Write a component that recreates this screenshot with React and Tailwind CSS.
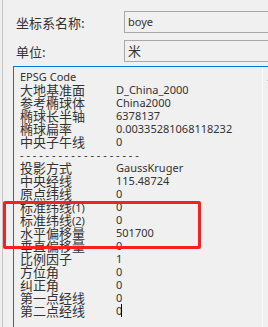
import React from "react";

const cjk = "font-['Noto_Sans_CJK_SC',sans-serif]";
const latin = "font-['Noto_Sans','Noto_Sans_CJK_SC',sans-serif]";

const params = [
  ["大地基准面", "", "D_China_2000"],
  ["参考椭球体", "", "China2000"],
  ["椭球长半轴", "", "6378137"],
  ["椭球扁率", "", "0.00335281068118232"],
  ["中央子午线", "", "0"],
  null,
  ["投影方式", "", "GaussKruger"],
  ["中央经线", "", "115.48724"],
  ["原点纬线", "", "0"],
  ["标准纬线", "(1)", "0"],
  ["标准纬线", "(2)", "0"],
  ["水平偏移量", "", "501700"],
  ["垂直偏移量", "", "0"],
  ["比例因子", "", "1"],
  ["方位角", "", "0"],
  ["纠正角", "", "0"],
  ["第一点经线", "", "0"],
  ["第二点经线", "", "0"],
];

function Field({ label, value, valueCjk }) {
  return (
    <div className="flex items-center h-[22px]">
      <div className={`w-[108px] text-[13px] leading-[13px] text-[#333] ${cjk}`}>{label}</div>
      <div className="flex-1 h-[22px] border border-[#a8a8a8] bg-[#f0f0f0] flex items-center pl-[3px] -mr-[20px]">
        <span className={`text-[#333] ${valueCjk ? `text-[13px] ${cjk}` : `text-[11px] ${latin}`}`}>{value}</span>
      </div>
    </div>
  );
}

export default function App() {
  return (
    <div className="relative w-[268px] h-[327px] overflow-hidden bg-[#f0f0f0] pl-[2px]">
      <div className="h-full border-l border-[#c4c4c4] pl-[10px] pt-[11px]">
        <div className="pl-[3px] flex flex-col gap-[7px]">
          <Field label="坐标系名称:" value="boye" />
          <Field label="单位:" value="米" valueCjk />
        </div>

        {/* parameter text box */}
        <div className="mt-[4px] w-[266px] h-[280px] border-l border-t border-[#0078d7] flex">
          <div className="flex-1 pl-[6px] pt-[3px] text-[#333]">
            <div className={`h-[13px] leading-[13px] text-[11px] ${latin}`}>EPSG Code</div>
            {params.map((p, i) =>
              p === null ? (
                <div key={i} className={`h-[13px] leading-[13px] text-[11px] whitespace-nowrap ${latin}`}>
                  - - - - - - - - - - - - - - - - - - -
                </div>
              ) : (
                <div key={i} className="flex h-[13px] leading-[13px] whitespace-nowrap">
                  <div className={`w-[96px] text-[13px] ${cjk}`}>
                    {p[0]}
                    {p[1] && <span className={`text-[11px] ${latin}`}>{p[1]}</span>}
                  </div>
                  <div className={`text-[11px] ${latin} flex items-center`}>
                    {p[2]}
                    {i === params.length - 1 && <span className="inline-block w-px h-[13px] bg-black ml-[-1px]" />}
                  </div>
                </div>
              )
            )}
          </div>
          <div className="w-[17px] border-l border-[#fafafa] bg-[#f0f0f0] flex justify-center pt-[9px]">
            <svg width="9" height="5" viewBox="0 0 9 5">
              <polygon points="0,5 4.5,0 9,5 7,5 4.5,2.2 2,5" fill="#a3a3a3" />
            </svg>
          </div>
        </div>
      </div>

      {/* red annotation */}
      <div className="absolute left-[3px] top-[201px] w-[198px] h-[48px] border-[3px] border-[#f52020] rounded-[2px]" />
    </div>
  );
}
